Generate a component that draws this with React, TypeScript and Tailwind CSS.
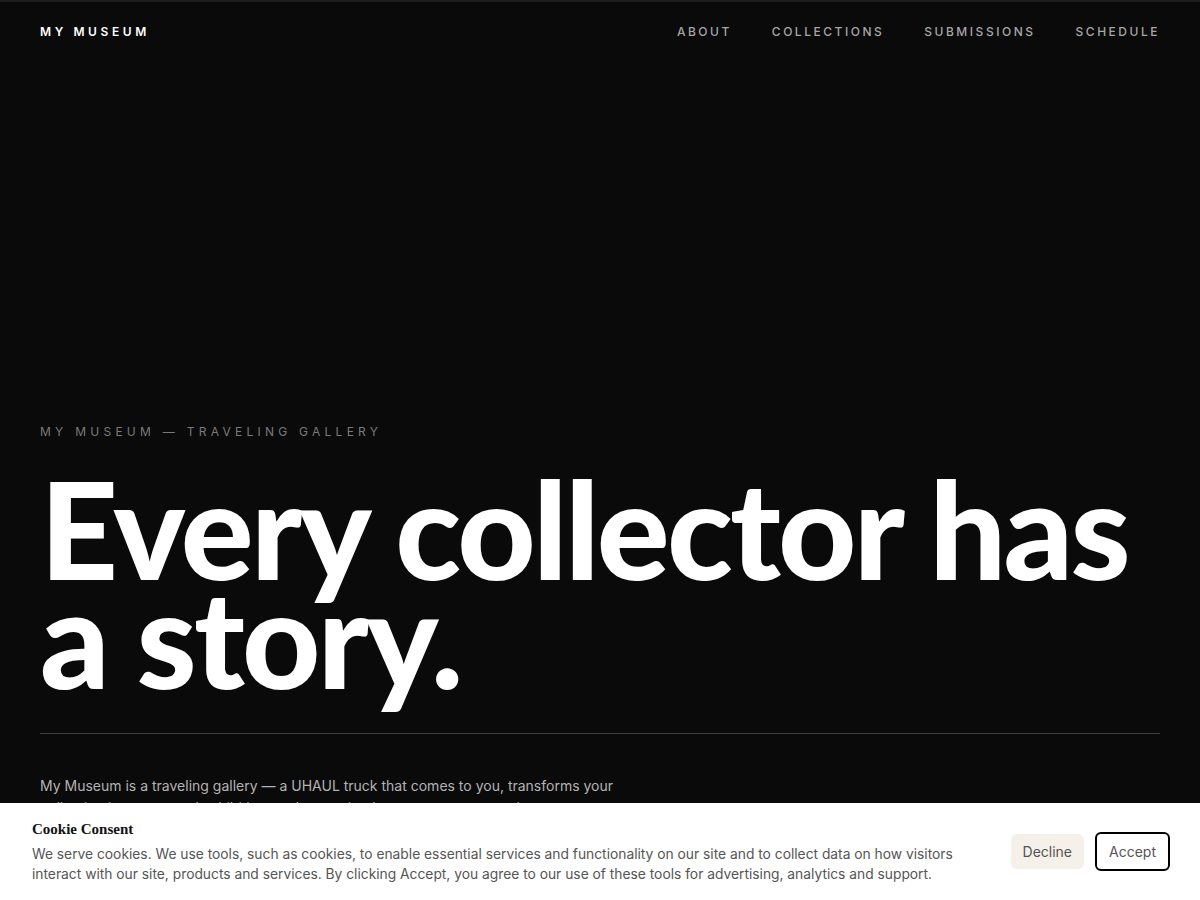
import React from "react";

export default function App() {
  const inter = { fontFamily: "Inter, 'Liberation Sans', sans-serif" };
  return (
    <div className="min-h-[900px] w-full bg-[#0a0a0a] text-white border-t-2 border-[#1c1c1c]" style={inter}>
      <header className="flex items-center justify-between px-10 h-[60px]">
        <div className="text-[12px] font-semibold tracking-[0.3em] text-white">MY MUSEUM</div>
        <nav className="flex gap-10 text-[12px] font-medium tracking-[0.21em] text-[#a6a6a6]">
          <span>ABOUT</span>
          <span>COLLECTIONS</span>
          <span>SUBMISSIONS</span>
          <span>SCHEDULE</span>
        </nav>
      </header>
      <main className="px-10 pt-[362px]">
        <div className="text-[12px] tracking-[0.355em] text-[#7a7a7a] leading-4">MY MUSEUM — TRAVELING GALLERY</div>
        <h1
          className="mt-[33px] text-[136px] leading-[109px] font-black tracking-[-0.02em] text-white"
          style={{ fontFamily: "Lato, 'Noto Sans', sans-serif" }}
        >
          Every collector has
          <br />a story.
        </h1>
        <div className="mt-[42px] h-px bg-[#3f3f3f]" />
        <p className="mt-[41px] max-w-[600px] text-[14px] leading-[22px] text-[#b3b3b3]">
          My Museum is a traveling gallery — a UHAUL truck that comes to you, transforms your collection into a curated exhibition, and opens its doors to your community.
        </p>
      </main>
      <div className="fixed bottom-0 left-0 right-0 h-[97px] bg-white flex items-center justify-between pl-8 pr-[30px]">
        <div className="flex-1 max-w-[935px]">
          <div
            className="text-[15px] font-bold text-[#111] leading-5"
            style={{ fontFamily: "'Liberation Serif', 'DejaVu Serif', serif" }}
          >
            Cookie Consent
          </div>
          <p className="mt-[5px] text-[13.8px] leading-5 text-[#555]">
            We serve cookies. We use tools, such as cookies, to enable essential services and functionality on our site and to collect data on how visitors interact with our site, products and services. By clicking Accept, you agree to our use of these tools for advertising, analytics and support.
          </p>
        </div>
        <div className="flex items-center gap-[11px]">
          <button className="h-[35px] px-3 rounded-md bg-[#f5f0e9] text-[14px] text-[#555]">Decline</button>
          <button className="h-[39px] px-3 rounded-md border-2 border-black text-[14px] text-[#555]">Accept</button>
        </div>
      </div>
    </div>
  );
}
